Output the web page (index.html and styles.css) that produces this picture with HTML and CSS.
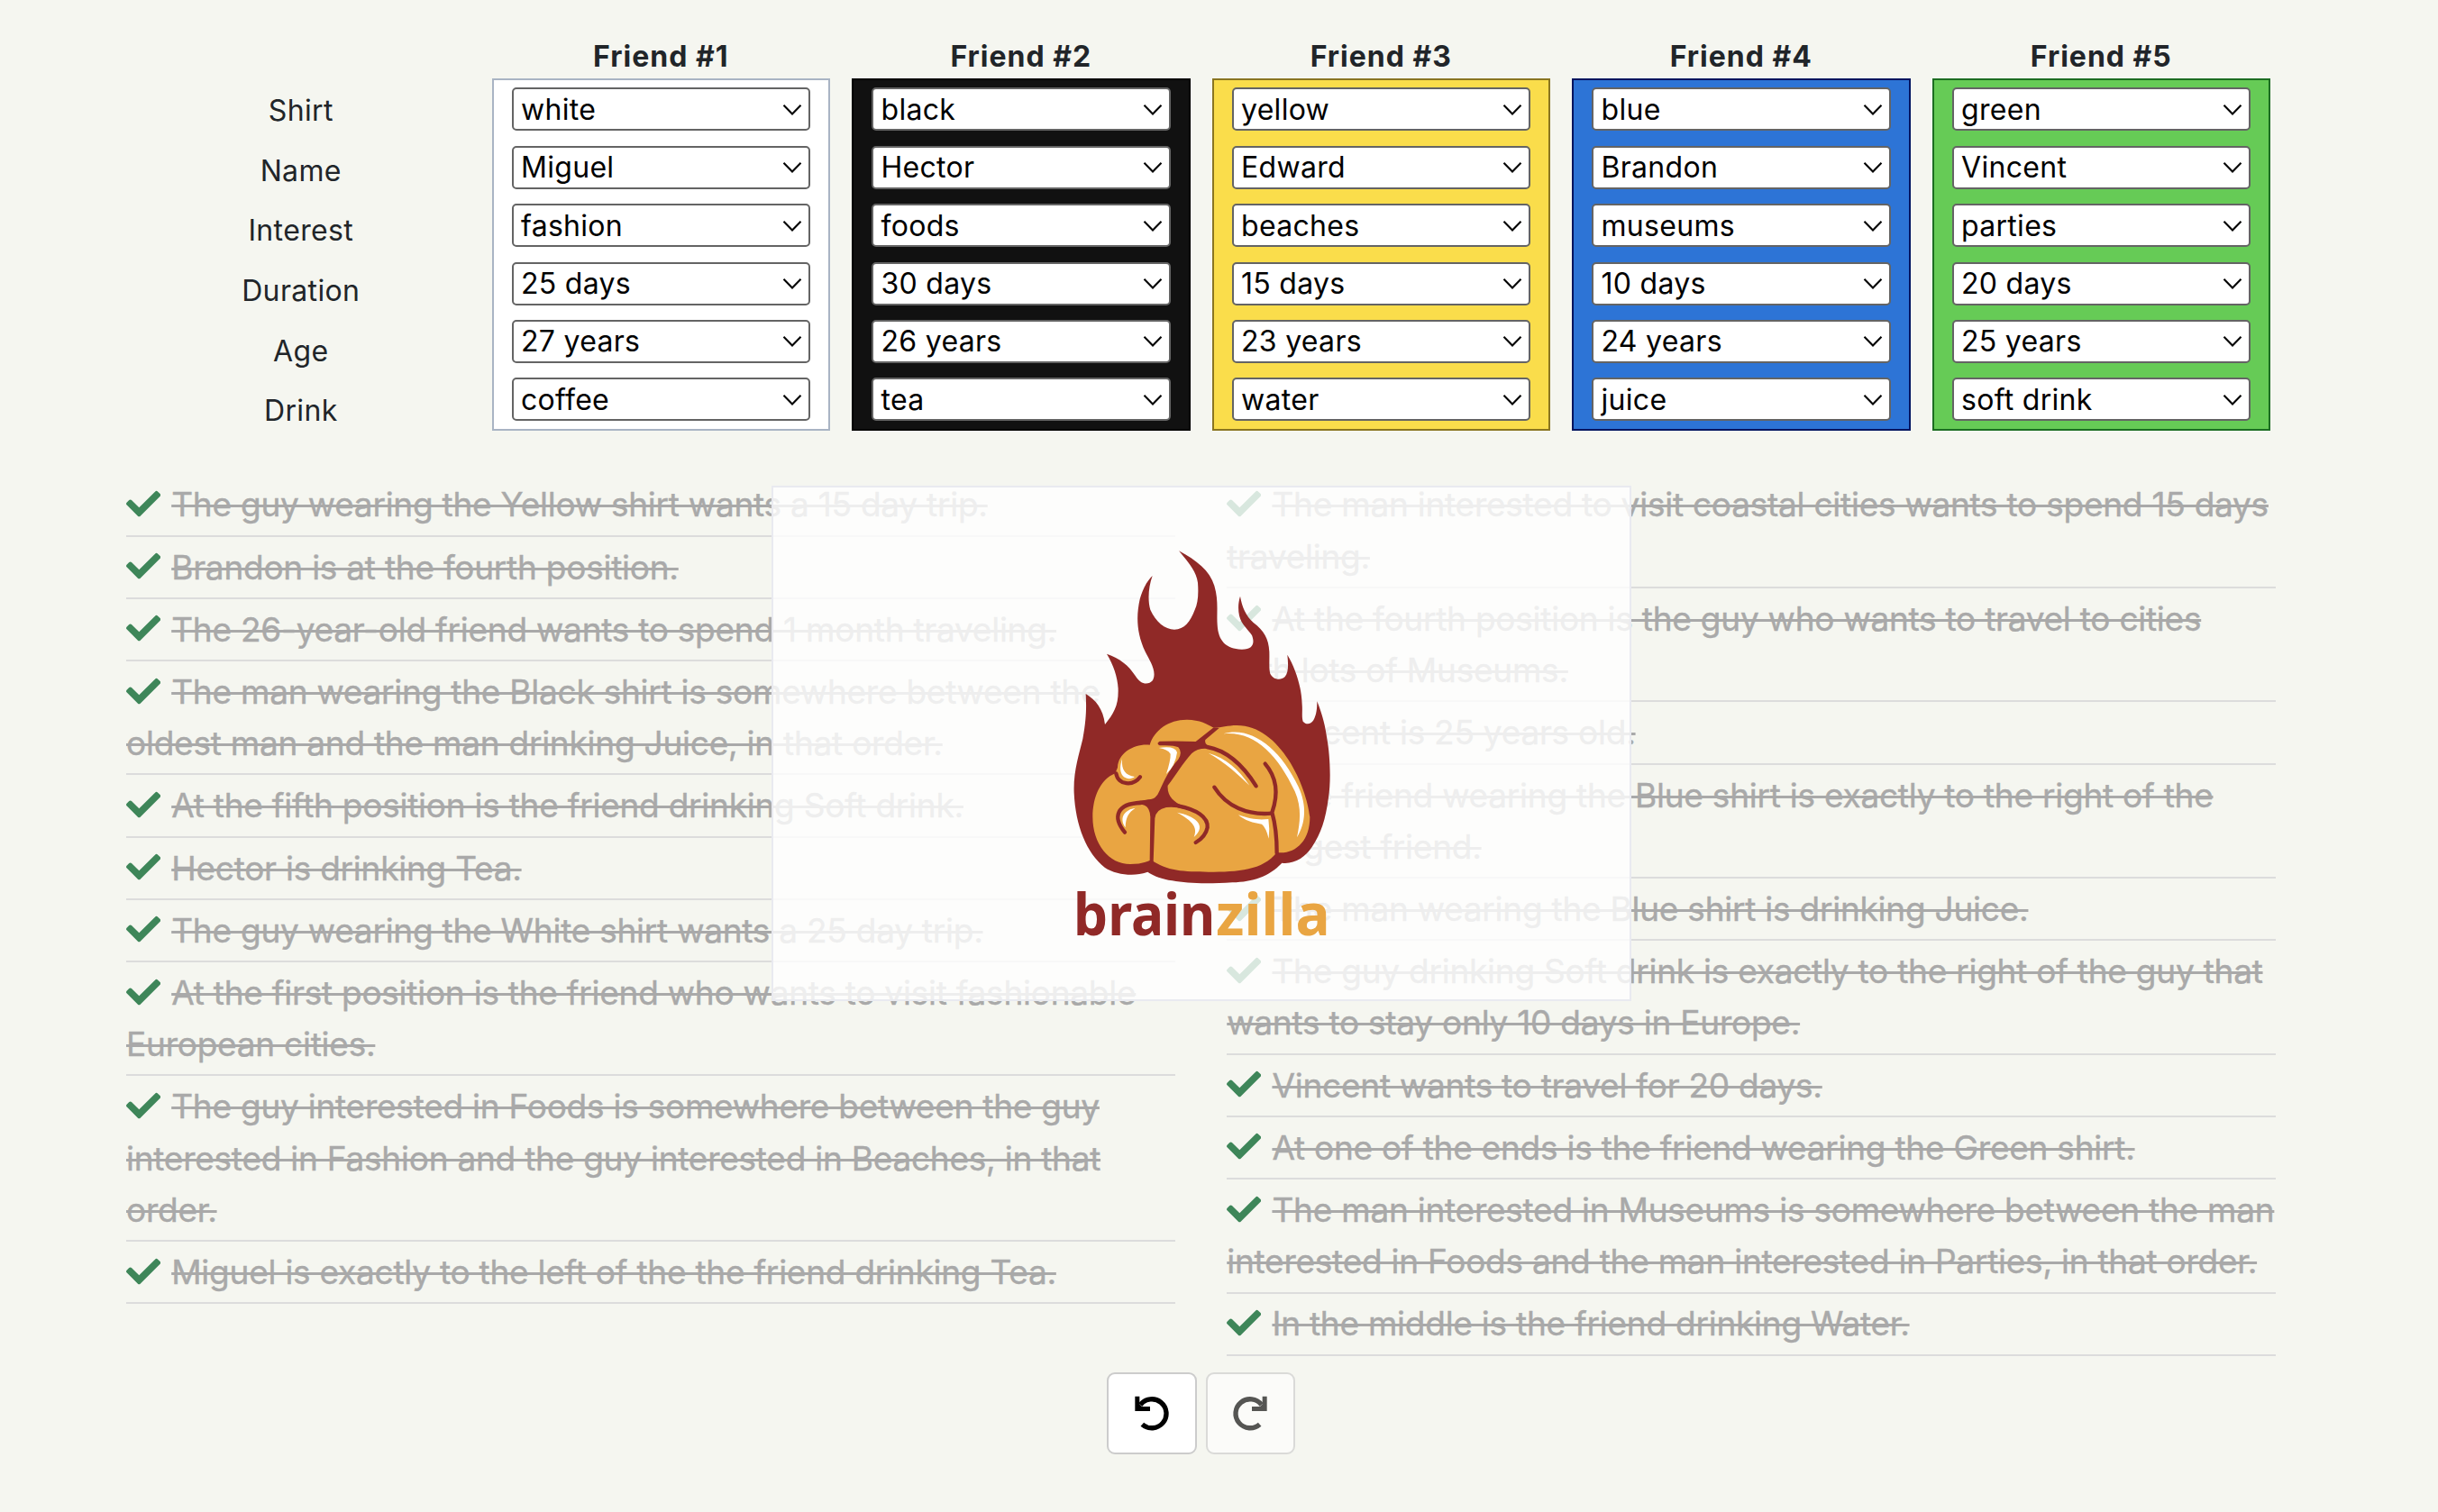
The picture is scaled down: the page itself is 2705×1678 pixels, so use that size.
FILE: index.html
```html
<!DOCTYPE html>
<html lang="en">
<head>
<meta charset="utf-8">
<title>Brainzilla</title>
<link rel="stylesheet" href="styles.css">
</head>
<body>
<svg class="sprite" aria-hidden="true">
  <symbol id="check" viewBox="0 0 512 512"><path d="M173.898 439.404l-166.4-166.4c-9.997-9.997-9.997-26.206 0-36.204l36.203-36.204c9.997-9.998 26.207-9.998 36.204 0L192 312.69 432.095 72.596c9.997-9.997 26.207-9.997 36.204 0l36.203 36.204c9.997 9.997 9.997 26.206 0 36.204l-294.4 294.401c-9.998 9.997-26.207 9.997-36.204-.001z"/></symbol>
  <symbol id="chevron" viewBox="0 0 22 14"><path d="M1.5 1.8 11 11.5l9.500-9.700" fill="none" stroke="#000" stroke-width="2.1"/></symbol>
  <symbol id="undo" viewBox="172 144 120 120"><path d="M194 177A48 48 0 1 1 200 242" fill="none" stroke="#000" stroke-width="16"/><path d="M176 149h15v26l8 8h27v15h-50z"/></symbol>
</svg>
<main class="page">
  <section class="puzzle">
    <div class="labels">
      <span>Shirt</span><span>Name</span><span>Interest</span><span>Duration</span><span>Age</span><span>Drink</span>
    </div>
    <div class="friend">
      <h2>Friend #1</h2>
      <div class="shirt shirt-white">
        <div class="select">white<svg><use href="#chevron"/></svg></div>
        <div class="select">Miguel<svg><use href="#chevron"/></svg></div>
        <div class="select">fashion<svg><use href="#chevron"/></svg></div>
        <div class="select">25 days<svg><use href="#chevron"/></svg></div>
        <div class="select">27 years<svg><use href="#chevron"/></svg></div>
        <div class="select">coffee<svg><use href="#chevron"/></svg></div>
      </div>
    </div>
    <div class="friend">
      <h2>Friend #2</h2>
      <div class="shirt shirt-black">
        <div class="select">black<svg><use href="#chevron"/></svg></div>
        <div class="select">Hector<svg><use href="#chevron"/></svg></div>
        <div class="select">foods<svg><use href="#chevron"/></svg></div>
        <div class="select">30 days<svg><use href="#chevron"/></svg></div>
        <div class="select">26 years<svg><use href="#chevron"/></svg></div>
        <div class="select">tea<svg><use href="#chevron"/></svg></div>
      </div>
    </div>
    <div class="friend">
      <h2>Friend #3</h2>
      <div class="shirt shirt-yellow">
        <div class="select">yellow<svg><use href="#chevron"/></svg></div>
        <div class="select">Edward<svg><use href="#chevron"/></svg></div>
        <div class="select">beaches<svg><use href="#chevron"/></svg></div>
        <div class="select">15 days<svg><use href="#chevron"/></svg></div>
        <div class="select">23 years<svg><use href="#chevron"/></svg></div>
        <div class="select">water<svg><use href="#chevron"/></svg></div>
      </div>
    </div>
    <div class="friend">
      <h2>Friend #4</h2>
      <div class="shirt shirt-blue">
        <div class="select">blue<svg><use href="#chevron"/></svg></div>
        <div class="select">Brandon<svg><use href="#chevron"/></svg></div>
        <div class="select">museums<svg><use href="#chevron"/></svg></div>
        <div class="select">10 days<svg><use href="#chevron"/></svg></div>
        <div class="select">24 years<svg><use href="#chevron"/></svg></div>
        <div class="select">juice<svg><use href="#chevron"/></svg></div>
      </div>
    </div>
    <div class="friend">
      <h2>Friend #5</h2>
      <div class="shirt shirt-green">
        <div class="select">green<svg><use href="#chevron"/></svg></div>
        <div class="select">Vincent<svg><use href="#chevron"/></svg></div>
        <div class="select">parties<svg><use href="#chevron"/></svg></div>
        <div class="select">20 days<svg><use href="#chevron"/></svg></div>
        <div class="select">25 years<svg><use href="#chevron"/></svg></div>
        <div class="select">soft drink<svg><use href="#chevron"/></svg></div>
      </div>
    </div>
  </section>

  <section class="clues">
    <ul>
      <li><svg><use href="#check"/></svg><del>The guy wearing the Yellow shirt wants a 15 day trip.</del></li>
      <li><svg><use href="#check"/></svg><del>Brandon is at the fourth position.</del></li>
      <li><svg><use href="#check"/></svg><del>The 26-year-old friend wants to spend 1 month traveling.</del></li>
      <li><svg><use href="#check"/></svg><del>The man wearing the Black shirt is somewhere between the oldest man and the man drinking Juice, in that order.</del></li>
      <li><svg><use href="#check"/></svg><del>At the fifth position is the friend drinking Soft drink.</del></li>
      <li><svg><use href="#check"/></svg><del>Hector is drinking Tea.</del></li>
      <li><svg><use href="#check"/></svg><del>The guy wearing the White shirt wants a 25 day trip.</del></li>
      <li><svg><use href="#check"/></svg><del>At the first position is the friend who wants to visit fashionable European cities.</del></li>
      <li><svg><use href="#check"/></svg><del>The guy interested in Foods is somewhere between the guy interested in Fashion and the guy interested in Beaches, in that order.</del></li>
      <li><svg><use href="#check"/></svg><del>Miguel is exactly to the left of the the friend drinking Tea.</del></li>
    </ul>
    <ul>
      <li><svg><use href="#check"/></svg><del>The man interested to visit coastal cities wants to spend 15 days traveling.</del></li>
      <li><svg><use href="#check"/></svg><del>At the fourth position is the guy who wants to travel to cities with&nbsp;lots of Museums.</del></li>
      <li><svg><use href="#check"/></svg><del>Vincent is 25 years old.</del></li>
      <li><svg><use href="#check"/></svg><del>The friend wearing the Blue shirt is exactly to the right of the youngest friend.</del></li>
      <li><svg><use href="#check"/></svg><del>The man wearing the Blue shirt is drinking Juice.</del></li>
      <li><svg><use href="#check"/></svg><del>The guy drinking Soft drink is exactly to the right of the guy that wants to stay only 10 days in Europe.</del></li>
      <li><svg><use href="#check"/></svg><del>Vincent wants to travel for 20 days.</del></li>
      <li><svg><use href="#check"/></svg><del>At one of the ends is the friend wearing the Green shirt.</del></li>
      <li><svg><use href="#check"/></svg><del>The man interested in Museums is somewhere between the man interested in Foods and the man interested in Parties, in that order.</del></li>
      <li><svg><use href="#check"/></svg><del>In the middle is the friend drinking Water.</del></li>
    </ul>
    <div class="splash">
      <svg class="logo" viewBox="7 0 1020 1410">
        <path fill="#902927" d="M442 64C500 95 545 130 560 180C575 230 567 270 570 310C573 365 600 391 650 392C690 393 695 370 685 345C672 325 650 310 643 280C638 255 640 235 646 215C652 250 665 280 690 303C725 330 741 355 743 400C744 430 741 455 746 473C755 492 780 497 795 483C808 468 806 440 803 410C830 455 850 515 852 575C854 600 850 615 855 632C865 643 880 643 890 628C900 610 902 590 902 565C920 610 930 650 935 690C945 740 949 830 940 885C930 960 915 1005 885 1050C862 1085 825 1108 785 1103C740 1150 690 1165 620 1168C540 1173 470 1172 420 1162C385 1156 360 1148 338 1133C300 1148 235 1145 195 1118C135 1070 98 980 93 870C90 800 110 740 122 690C135 620 134 580 132 540C165 560 190 590 196 642C225 605 240 580 240 530C240 490 225 445 202 407C245 422 275 445 297 480C315 510 340 512 355 495C370 465 345 430 330 400C300 335 300 280 312 225C320 195 335 165 354 147C340 185 338 230 347 260C365 300 395 325 427 326C460 325 480 300 495 260C505 240 508 210 505 170C500 135 480 110 442 64Z"/>
        <g transform="translate(0 600)">
          <path fill="#e9a542" d="M345 110C295 105 240 135 238 185L230 205C180 225 155 285 155 350C155 440 210 507 280 507Q320 507 350 493C400 530 460 533 540 533C640 533 720 528 768 468C830 475 878 430 878 350C868 250 780 45 635 45C600 45 575 55 555 52C540 42 510 26 470 26C410 25 360 60 345 110Z"/>
          <path fill="#902927" d="M378 98Q440 96 498 99L558 52L576 54L530 93Q527 104 536 110L540 123Q505 120 485 138C455 170 430 215 405 245C402 280 425 300 455 313L460 323Q430 315 400 318Q365 325 362 355L357 500L345 495L347 350Q345 312 320 309L300 308L300 297C335 292 352 293 362 286Q372 278 378 262C390 235 410 190 440 158Q455 135 440 118Q425 110 378 112Q365 105 378 98Z"/>
          <g fill="none" stroke="#902927" stroke-width="13" stroke-linecap="round">
            <path d="M536 117C610 130 660 185 699 247"/>
            <path d="M233 205C240 245 290 248 313 217"/>
            <path d="M315 303C235 305 220 350 262 401"/>
            <path d="M440 313C500 325 540 350 537 385C532 410 515 425 498 435"/>
            <path d="M560 251C600 315 670 345 750 338"/>
            <path d="M729 173C765 215 775 270 752 335C765 380 768 420 768 470"/>
          </g>
          <g fill="#fff">
            <path d="M590 73C680 45 780 120 840 250C868 310 865 370 835 418C845 370 852 320 828 265C770 140 690 62 590 73Z"/>
            <path d="M540 137C600 155 640 190 677 245C640 210 600 170 540 137Z"/>
            <path d="M375 120Q430 112 436 135Q430 180 400 207Q415 160 414 140Q405 125 375 120Z"/>
            <path d="M253 157C250 195 265 212 295 216C275 232 232 220 253 157Z"/>
            <path d="M297 320C265 325 240 350 264 385C265 350 275 335 297 320Z"/>
            <path d="M436 335C490 345 540 375 492 417C505 385 490 365 436 335Z"/>
            <path d="M640 343C680 358 710 360 740 357Q745 390 741 422Q732 385 718 374C690 370 660 362 640 343Z"/>
          </g>
        </g>
        <text class="wordmark" x="91" y="1345" textLength="472" lengthAdjust="spacingAndGlyphs" fill="#902927">brain</text>
        <text class="wordmark" x="565" y="1345" textLength="380" lengthAdjust="spacingAndGlyphs" fill="#e9a542">zilla</text>
      </svg>
    </div>
  </section>

  <div class="actions">
    <button class="btn"><svg><use href="#undo"/></svg></button>
    <button class="btn btn-redo" disabled><svg><use href="#undo"/></svg></button>
  </div>
</main>
</body>
</html>
```
FILE: styles.css
```css
* { box-sizing: border-box; }

body {
  margin: 0;
  background: #f5f6f0;
  color: #212529;
  font-family: "Inter", "Liberation Sans", sans-serif;
  font-size: 32px;
}

.sprite { display: none; }

.page { padding: 38px 174px 0 134px; }

/* Attribute grid */
.puzzle {
  display: grid;
  grid-template-columns: repeat(6, 1fr);
  height: 452px;
}

.labels {
  display: flex;
  flex-direction: column;
  padding-top: 52px;
  text-align: center;
  line-height: 66.67px;
  letter-spacing: .35px;
}

.friend { padding: 0 12px; }

.friend h2 {
  margin: 0;
  height: 49.4px;
  line-height: 49px;
  font-size: 32px;
  font-weight: 700;
  letter-spacing: 1px;
  text-align: center;
}

.shirt {
  display: flex;
  flex-direction: column;
  gap: 16.4px;
  height: 391px;
  padding: 8px 20px;
  border: 2px solid;
}

.shirt-white { background: #fff; border-color: #a9b4c4; }
.shirt-black { background: #111; border-color: #000; }
.shirt-yellow { background: #fadd4b; border-color: #8a7520; }
.shirt-blue { background: #2d74d6; border-color: #00145f; }
.shirt-green { background: #66cb56; border-color: #1c6d22; }

.select {
  display: flex;
  align-items: center;
  justify-content: space-between;
  height: 48px;
  padding: 1px 7px 0 8.5px;
  background: #fff;
  border: 2px solid #646464;
  border-radius: 5px;
  color: #000;
  line-height: 44px;
  letter-spacing: .3px;
}

.select svg { width: 22px; height: 14px; }

/* Clue lists */
.clues {
  position: relative;
  display: grid;
  grid-template-columns: 1fr 1fr;
  gap: 57.5px;
  margin-top: 36.500px;
  padding: 0 6px;
}

.clues ul { margin: 0; padding: 0; list-style: none; }

.clues li {
  padding: 4.95px 0;
  border-bottom: 2px solid #dcdcdc;
  color: #a9a9a9;
  font-size: 37px;
  line-height: 57.3px;
  letter-spacing: -.24px;
  -webkit-text-stroke: .4px #a9a9a9;
}

.clues li svg {
  width: 38.2px;
  height: 38.2px;
  margin-right: 12px;
  vertical-align: -4.800px;
  fill: #3e8659;
}

.clues del { text-decoration-thickness: 3px; }

.splash {
  position: absolute;
  top: 12.500px;
  left: 721.500px;
  width: 954px;
  height: 572px;
  padding-top: 49px;
  background: rgba(255, 255, 255, .8);
  border: 2px solid #e9eaf0;
  text-align: center;
}

.clues .logo { width: 340px; height: 470px; }

.wordmark {
  font-family: "Noto Sans", "Open Sans", sans-serif;
  font-size: 192px;
  font-weight: 700;
}

/* Undo and redo */
.actions {
  display: flex;
  justify-content: center;
  gap: 10px;
  margin-top: 18px;
}

.btn {
  display: flex;
  align-items: center;
  justify-content: center;
  width: 99.5px;
  height: 91px;
  padding: 0;
  background: #fff;
  border: 2px solid #ccc;
  border-radius: 9px;
}

.btn svg { width: 40px; height: 40px; }
.btn-redo { opacity: .65; }
.btn-redo svg { transform: scaleX(-1); }
```
